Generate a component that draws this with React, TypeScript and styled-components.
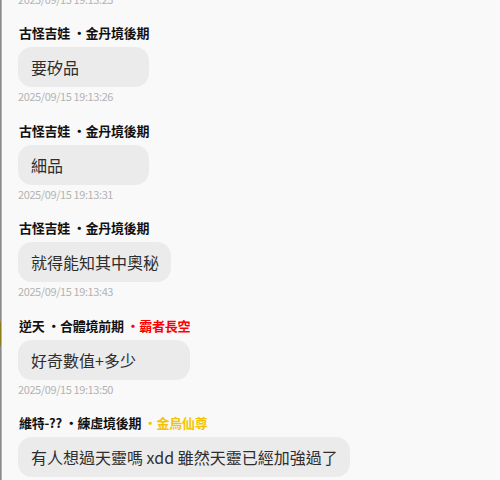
import React from "react";
import styled, { createGlobalStyle } from "styled-components";

const GlobalStyle = createGlobalStyle`
  html, body { margin: 0; padding: 0; background: #f9f9f9; }
  body { font-family: "Noto Sans CJK TC", "Noto Sans", sans-serif; }
`;

const Frame = styled.div`
  display: flex;
  width: 500px;
  height: 480px;
  overflow: hidden;
  background: #f9f9f9;
`;

const LeftEdge = styled.div`
  flex: 0 0 2px;
  background: linear-gradient(
    to bottom,
    #8a8a8a 0 322px,
    #8c7c1c 322px 346px,
    #8a8a8a 346px
  );
  box-shadow: inset -1px 0 0 #b4b4b4;
`;

const ChatPanel = styled.div`
  flex: 1;
  padding-left: 16px;
  overflow: hidden;
`;

const MessageList = styled.div`
  display: flex;
  flex-direction: column;
  align-items: flex-start;
`;

const Message = styled.div`
  display: inline-flex;
  flex-direction: column;
  align-items: stretch;
  margin-bottom: 17.5px;
`;

const Header = styled.div`
  height: 18px;
  line-height: 18px;
  font-size: 13px;
  font-weight: 700;
  letter-spacing: -0.25px;
  color: #111;
  white-space: nowrap;
  padding-left: 1px;
  margin-bottom: 5px;
`;

const Title = styled.span<{ $color: string }>`
  color: ${(p) => p.$color};
`;

const Bubble = styled.div`
  box-sizing: border-box;
  height: 40px;
  display: flex;
  align-items: center;
  padding: 0 12px 0 13px;
  background: #ebebeb;
  border-radius: 14px;
  font-size: 16px;
  color: #2e2e2e;
  white-space: nowrap;
`;

const Time = styled.div`
  margin-top: 1px;
  height: 16px;
  line-height: 16px;
  font-size: 11px;
  color: #b3b3b3;
  letter-spacing: -0.4px;
  white-space: nowrap;
`;

const EarlierTime = styled(Time)`
  margin-top: -9.5px;
  margin-bottom: 17.5px;
`;

type Msg = {
  name: string;
  rank: string;
  title?: string;
  titleColor?: string;
  text: string;
  time: string;
};

const messages: Msg[] = [
  { name: "古怪吉娃", rank: "金丹境後期", text: "要矽品", time: "2025/09/15 19:13:26" },
  { name: "古怪吉娃", rank: "金丹境後期", text: "細品", time: "2025/09/15 19:13:31" },
  { name: "古怪吉娃", rank: "金丹境後期", text: "就得能知其中奧秘", time: "2025/09/15 19:13:43" },
  {
    name: "逆天",
    rank: "合體境前期",
    title: "霸者長空",
    titleColor: "#ff0000",
    text: "好奇數值+多少",
    time: "2025/09/15 19:13:50",
  },
  {
    name: "維特-??",
    rank: "練虛境後期",
    title: "金烏仙尊",
    titleColor: "#f5c400",
    text: "有人想過天靈嗎 xdd 雖然天靈已經加強過了",
    time: "2025/09/15 19:14:02",
  },
];

export default function App() {
  return (
    <>
      <GlobalStyle />
      <Frame>
        <LeftEdge />
        <ChatPanel>
          <MessageList>
            <EarlierTime>2025/09/15 19:13:25</EarlierTime>
            {messages.map((m, i) => (
              <Message key={i}>
                <Header>
                  {m.name} ・{m.rank}
                  {m.title && <Title $color={m.titleColor!}> ・{m.title}</Title>}
                </Header>
                <Bubble>{m.text}</Bubble>
                <Time>{m.time}</Time>
              </Message>
            ))}
          </MessageList>
        </ChatPanel>
      </Frame>
    </>
  );
}
